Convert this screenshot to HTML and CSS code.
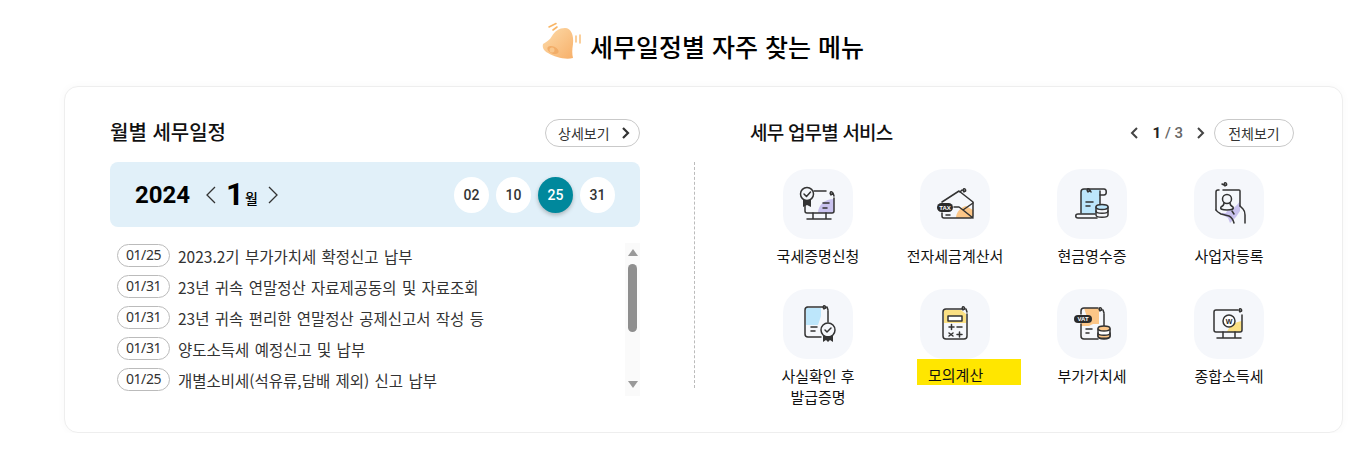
FILE: index.html
```html
<!DOCTYPE html>
<html lang="ko">
<head>
  <meta charset="UTF-8">
  <title>세무일정별 자주 찾는 메뉴</title>
  <link rel="stylesheet" href="styles.css">
</head>
<body>
  <h2 class="page-title">
    <svg class="bell" viewBox="0 0 50 46" width="50" height="46">
      <defs>
        <linearGradient id="bellFill" x1="0" y1="0" x2="1" y2="1">
          <stop offset="0" stop-color="#fddcab"/>
          <stop offset="1" stop-color="#f7b06a"/>
        </linearGradient>
      </defs>
      <path d="M10 9l7-3.500M14 12l4-3" stroke="#f8b566" stroke-width="1.600" fill="none" stroke-linecap="round"/>
      <path d="M37 18v6M41 17v8" stroke="#f8b566" stroke-width="1.300" fill="none" stroke-linecap="round"/>
      <path d="M26 10c-6 0-10 3-13 8-2 4-6 6-9 8-1 4 1 7 5 9 7 4 17 7 25 5-1-4-1-8 0-14 1-9-2-16-8-16z" fill="url(#bellFill)"/>
      <ellipse cx="14" cy="32" rx="6" ry="3.500" transform="rotate(25 14 32)" fill="#f2ad68"/>
      <circle cx="13" cy="32" r="2.500" fill="#f9c78c"/>
    </svg>
    세무일정별 자주 찾는 메뉴
  </h2>

  <div class="card">
    <section class="schedule">
      <div class="sec-head">
        <h3>월별 세무일정</h3>
        <a class="btn-line btn-more">상세보기
          <svg viewBox="0 0 10 14" width="10" height="14"><path d="M2 2l5 5-5 5" fill="none" stroke="#333" stroke-width="2.200"/></svg>
        </a>
      </div>
      <div class="month-bar">
        <div class="month">
          <b class="year">2024</b>
          <svg viewBox="0 0 12 20" width="12" height="20"><path d="M10 2l-8 8 8 8" fill="none" stroke="#333" stroke-width="1.300"/></svg>
          <b class="mon-num">1</b><b class="mon-unit">월</b>
          <svg viewBox="0 0 12 20" width="12" height="20"><path d="M2 2l8 8-8 8" fill="none" stroke="#333" stroke-width="1.300"/></svg>
        </div>
        <ul class="days">
          <li>02</li>
          <li>10</li>
          <li class="on">25</li>
          <li>31</li>
        </ul>
      </div>
      <div class="list-wrap">
        <ul class="tax-list">
          <li><span class="date">01/25</span>2023.2기 부가가치세 확정신고 납부</li>
          <li><span class="date">01/31</span>23년 귀속 연말정산 자료제공동의 및 자료조회</li>
          <li><span class="date">01/31</span>23년 귀속 편리한 연말정산 공제신고서 작성 등</li>
          <li><span class="date">01/31</span>양도소득세 예정신고 및 납부</li>
          <li><span class="date">01/25</span>개별소비세(석유류,담배 제외) 신고 납부</li>
        </ul>
        <div class="scroll">
          <i class="arrow up"></i>
          <i class="thumb"></i>
          <i class="arrow down"></i>
        </div>
      </div>
    </section>

    <div class="divider"></div>

    <section class="service">
      <div class="sec-head">
        <h3>세무 업무별 서비스</h3>
        <div class="pager">
          <svg viewBox="0 0 10 14" width="10" height="14"><path d="M8 2L3 7l5 5" fill="none" stroke="#444" stroke-width="2"/></svg>
          <span class="count"><b>1</b> / 3</span>
          <svg viewBox="0 0 10 14" width="10" height="14"><path d="M2 2l5 5-5 5" fill="none" stroke="#444" stroke-width="2"/></svg>
          <a class="btn-line">전체보기</a>
        </div>
      </div>
      <ul class="menu">
        <li>
          <span class="tile">
            <svg viewBox="0 0 70 70" width="70" height="70">
              <path d="M35 44c0-8 7-14 16-14v12a2 2 0 0 1-2 2z" fill="#c9c2ee"/>
              <g class="ln">
                <path d="M31 22h12M51 29v13a2 2 0 0 1-2 2H24a2 2 0 0 1-2-2v-9"/>
                <path d="M24 50h24M30 44v6M43 44v6"/>
                <circle cx="24" cy="25" r="6.500" fill="#f5f7fb"/>
                <path d="M21 25l2.500 2.500 4-4.500"/>
                <path d="M40 34h6M40 39h4"/>
                <path d="M48 26c-2-2 0-4 1-3s1 3-1 2M50 24l1 3"/>
              </g>
              <path d="M20 31v7l4-2 4 2v-7z" fill="#333"/>
            </svg>
          </span>
          <span class="label">국세증명신청</span>
        </li>
        <li>
          <span class="tile">
            <svg viewBox="0 0 70 70" width="70" height="70">
              <path d="M36 49c0-6 5-11 10-12l7 4v6a2 2 0 0 1-2 2z" fill="#fcc687"/>
              <g class="ln">
                <path d="M22 33l17-11 14 11v14a2 2 0 0 1-2 2H24a2 2 0 0 1-2-2v-3"/>
                <path d="M53 34l-10 7-4-3h-5M43 41l10 8"/>
                <path d="M26 46h4"/>
                <path d="M44 23c-2-2 0-4 1-3s1 3-1 2M40 23l2-2"/>
              </g>
              <rect x="17" y="34" width="16" height="9" rx="4.500" fill="#2b2b2b"/>
              <text class="tag" x="25" y="40.600">TAX</text>
            </svg>
          </span>
          <span class="label">전자세금계산서</span>
        </li>
        <li>
          <span class="tile">
            <svg viewBox="0 0 70 70" width="70" height="70">
              <path d="M26 20h17v14l-4 2v9H24V23z" fill="#bde6fb"/>
              <g class="ln">
                <path d="M27 20h20c3 0 3 6 0 6h-4M24 44V23c0-2 1-3 3-3"/>
                <path d="M43 22v13M40 49H21c-3 0-3-4 0-4h17"/>
                <path d="M29 33h7M29 37h4"/>
                <path d="M31 23c-2-2 0-4 1-3s1 3-1 2M33 21l1 2"/>
                <path d="M39 38v8c0 3 12 3 12 0v-8" fill="#f5f7fb"/>
                <path d="M39 42c0 3 12 3 12 0"/>
                <ellipse cx="45" cy="38" rx="6" ry="2.500" fill="#bde6fb"/>
              </g>
            </svg>
          </span>
          <span class="label">현금영수증</span>
        </li>
        <li>
          <span class="tile">
            <svg viewBox="0 0 70 70" width="70" height="70">
              <path d="M33 42c5-1 10-5 13-10v10l-4 6-6 6-4-10z" fill="#c9c2ee"/>
              <path d="M27 44h8l3 6-6-2z" fill="#c9c2ee"/>
              <g class="ln">
                <path d="M29 21h16a1 1 0 0 1 1 1v15M22 41V23a2 2 0 0 1 2-2h1"/>
                <path d="M22 41c1 2 3 3 5 4l8 2c2 1 4 3 5 7M46 37l3 3c2 2 2 4 2 6v8"/>
                <path d="M38 42l2 3"/>
                <circle cx="33" cy="30" r="4.500" fill="#f5f7fb"/>
                <path d="M30 34c0 2-1 3-3 4-1 2 1 3 6 3s7-1 6-3c-2-1-3-2-3-4"/>
                <path d="M31 17c-2-2 0-4 1-3s1 3-1 2M28 15l2 1"/>
              </g>
            </svg>
          </span>
          <span class="label">사업자등록</span>
        </li>
        <li>
          <span class="tile">
            <svg viewBox="0 0 70 70" width="70" height="70">
              <path d="M23 19h15v8l-3 9H23z" fill="#bde6fb"/>
              <g class="ln">
                <path d="M24 18h17M45 22v11M38 48H25a3 3 0 0 1-3-3V21a3 3 0 0 1 3-3"/>
                <path d="M28 38h6M28 42h4"/>
                <circle cx="45" cy="41" r="7"/>
                <path d="M42 41l2 2 4-4"/>
                <path d="M41 20c-2-2 0-4 1-3s1 3-1 2M44 18l1 3"/>
              </g>
              <path d="M40 47v6l3-2 2 2 2-2 3 2v-6z" fill="#333"/>
            </svg>
          </span>
          <span class="label">사실확인 후<br>발급증명</span>
        </li>
        <li>
          <span class="tile">
            <svg viewBox="0 0 70 70" width="70" height="70">
              <path d="M24 21h17l5 4v9H24z" fill="#fbe083"/>
              <g class="ln">
                <path d="M42 20H26a3 3 0 0 0-3 3v24a3 3 0 0 0 3 3h18a3 3 0 0 0 3-3V25"/>
                <rect x="28" y="27" width="14" height="5" fill="#fff"/>
                <path d="M29 38h5M31.500 35.500v5M37 38h5M29 44l4 3M33 44l-4 3M37 45.500h5M39.500 43v5"/>
                <path d="M43 21c-2-2 0-4 1-3s1 3-1 2M46 20l1 3"/>
              </g>
            </svg>
          </span>
          <span class="label hl">모의계산</span>
        </li>
        <li>
          <span class="tile">
            <svg viewBox="0 0 70 70" width="70" height="70">
              <path d="M27 19h15v16h-6l-4 2h-8v-3h8z" fill="#fcc687"/>
              <g class="ln">
                <path d="M41 19H27a3 3 0 0 0-3 3v3M24 35v12a3 3 0 0 0 3 3h14M47 25v12"/>
                <path d="M29 40h6M29 44h3"/>
                <path d="M43 22c-2-2 0-4 1-3s1 3-1 2M46 21l1 3"/>
                <path d="M41 40v7c0 4 12 4 12 0v-7" fill="#fff"/>
                <path d="M41 47c0 3 12 3 12 0v-3c0 3-12 3-12 0z" fill="#fcc687"/>
                <ellipse cx="47" cy="39.500" rx="6" ry="2.500" fill="#fcc687"/>
              </g>
              <rect x="17" y="26" width="18" height="8" rx="4" fill="#2b2b2b"/>
              <text class="tag" x="26" y="32">VAT</text>
            </svg>
          </span>
          <span class="label">부가가치세</span>
        </li>
        <li>
          <span class="tile">
            <svg viewBox="0 0 70 70" width="70" height="70">
              <path d="M33 43c2-6 8-10 15-11v9a2 2 0 0 1-2 2z" fill="#fbe083"/>
              <g class="ln">
                <path d="M44 21H22a2 2 0 0 0-2 2v18a2 2 0 0 0 2 2h24a2 2 0 0 0 2-2V26"/>
                <path d="M23 49h24M29 43v6M41 43v6"/>
                <circle cx="35" cy="32" r="6" fill="#fff"/>
                <path d="M46 23c-2-2 0-4 1-3s1 3-1 2"/>
              </g>
              <text class="tag dark" x="35" y="34.500">W</text>
            </svg>
          </span>
          <span class="label">종합소득세</span>
        </li>
      </ul>
    </section>
  </div>
</body>
</html>
```

FILE: styles.css
```css
body {
  margin: 0;
  background: #fff;
  color: #111;
  font-family: "Noto Sans CJK KR", "Noto Sans", sans-serif;
  font-size: 15px;
}
ul {
  margin: 0;
  padding: 0;
  list-style: none;
}
h2, h3 {
  margin: 0;
}

/* 타이틀 */
.page-title {
  display: flex;
  justify-content: center;
  align-items: center;
  height: 86px;
  padding: 6px 0 0 36px;
  gap: 1px;
  font-size: 25px;
  font-weight: 500;
  color: #000;
  box-sizing: border-box;
}
.bell {
  margin-top: -10px;
}

/* 카드 */
.card {
  display: flex;
  width: 1279px;
  height: 347px;
  margin-left: 64px;
  padding: 32px 43px 0 45px;
  box-sizing: border-box;
  border: 1px solid #eee;
  border-radius: 14px;
  background: #fff;
  box-shadow: 0 0 8px rgba(0, 0, 0, .03);
}
.schedule {
  flex: none;
  width: 530px;
}
.service {
  flex: none;
  width: 548px;
}
.divider {
  flex: none;
  width: 0;
  height: 226px;
  margin: 43px 55px 0 54px;
  border-left: 1px dashed #bbb;
}
.sec-head {
  display: flex;
  justify-content: space-between;
  align-items: center;
  height: 28px;
}
.sec-head h3 {
  font-size: 20px;
  font-weight: 500;
  margin-top: -4px;
}
.service .sec-head h3 {
  font-size: 19px;
  letter-spacing: -.8px;
}
.btn-line {
  display: inline-flex;
  align-items: center;
  justify-content: center;
  height: 28px;
  box-sizing: border-box;
  border: 1px solid #c9c9c9;
  border-radius: 14px;
  font-size: 14px;
  color: #333;
}
.btn-more {
  justify-content: space-between;
  width: 95px;
  padding: 0 8px 0 12px;
}

/* 월 선택 */
.month-bar {
  display: flex;
  justify-content: space-between;
  align-items: center;
  height: 65px;
  margin-top: 15px;
  padding: 0 25px;
  border-radius: 8px;
  background: #e1f0f9;
}
.month {
  display: flex;
  align-items: center;
  color: #000;
}
.year {
  margin-right: 15px;
  font-family: Roboto, sans-serif;
  font-size: 24px;
  font-weight: 700;
}
.mon-num {
  margin-left: 9px;
  font-family: Roboto, sans-serif;
  font-size: 31px;
  font-weight: 700;
}
.mon-unit {
  margin: 6px 9px 0 1px;
  font-size: 14px;
  font-weight: 500;
}
.days {
  display: flex;
  gap: 7px;
}
.days li {
  width: 35px;
  height: 36px;
  border-radius: 50%;
  background: #fff;
  font-family: Roboto, sans-serif;
  font-size: 14px;
  font-weight: 500;
  line-height: 36px;
  text-align: center;
  color: #333;
}
.days .on {
  background: #00889c;
  color: #fff;
  box-shadow: 0 2px 4px rgba(0, 0, 0, .25);
}

/* 일정 목록 */
.list-wrap {
  display: flex;
  justify-content: space-between;
  margin-top: 16px;
}
.tax-list {
  margin-top: -3px;
  padding-left: 7px;
}
.tax-list li {
  display: flex;
  align-items: center;
  gap: 8px;
  height: 31px;
  font-size: 15.500px;
  word-spacing: 1px;
  color: #333;
  white-space: nowrap;
}
.date {
  width: 53px;
  height: 23px;
  box-sizing: border-box;
  border: 1px solid #bbb;
  border-radius: 12px;
  font-family: "Noto Sans", sans-serif;
  font-size: 14px;
  letter-spacing: -.4px;
  line-height: 20px;
  text-align: center;
}
.scroll {
  display: flex;
  flex-direction: column;
  align-items: center;
  width: 15px;
  height: 153px;
  background: #fafafa;
}
.thumb {
  width: 9px;
  height: 68px;
  margin-top: 8px;
  border-radius: 5px;
  background: #8e8e8e;
}
.arrow {
  width: 0;
  height: 0;
  border-left: 5px solid transparent;
  border-right: 5px solid transparent;
}
.arrow.up {
  margin-top: 6px;
  border-bottom: 7px solid #999;
}
.arrow.down {
  margin-top: 49px;
  border-top: 7px solid #999;
}

/* 서비스 메뉴 */
.pager {
  display: flex;
  align-items: center;
  margin-right: 4px;
}
.count {
  margin: 0 13px 0 14px;
  font-family: Roboto, sans-serif;
  font-size: 15px;
  font-weight: 500;
  color: #666;
  white-space: nowrap;
}
.count b {
  color: #222;
  font-weight: 700;
}
.pager .btn-line {
  width: 80px;
  margin-left: 8px;
}
.menu {
  display: grid;
  grid-template-columns: repeat(4, 137px);
  grid-auto-rows: 120px;
  margin: 22px 0 0 -.5px;
}
.menu li {
  display: flex;
  flex-direction: column;
  align-items: center;
}
.tile {
  display: block;
  width: 70px;
  height: 70px;
  border-radius: 24px;
  background: #f5f7fb;
}
.label {
  margin-top: 6px;
  font-size: 15px;
  line-height: 21px;
  text-align: center;
  color: #111;
}
.hl {
  align-self: flex-start;
  width: 104px;
  height: 26px;
  margin: 0 0 0 30.500px;
  padding: 5px 0 0 11px;
  box-sizing: border-box;
  background: #ffe600;
  text-align: left;
}
.ln {
  fill: none;
  stroke: #333;
  stroke-width: 1.500;
  stroke-linecap: round;
  stroke-linejoin: round;
}
.tag {
  font-family: "Liberation Sans", sans-serif;
  font-size: 6px;
  font-weight: 700;
  fill: #fff;
  text-anchor: middle;
}
.tag.dark {
  fill: #222;
  font-size: 7px;
}
```
